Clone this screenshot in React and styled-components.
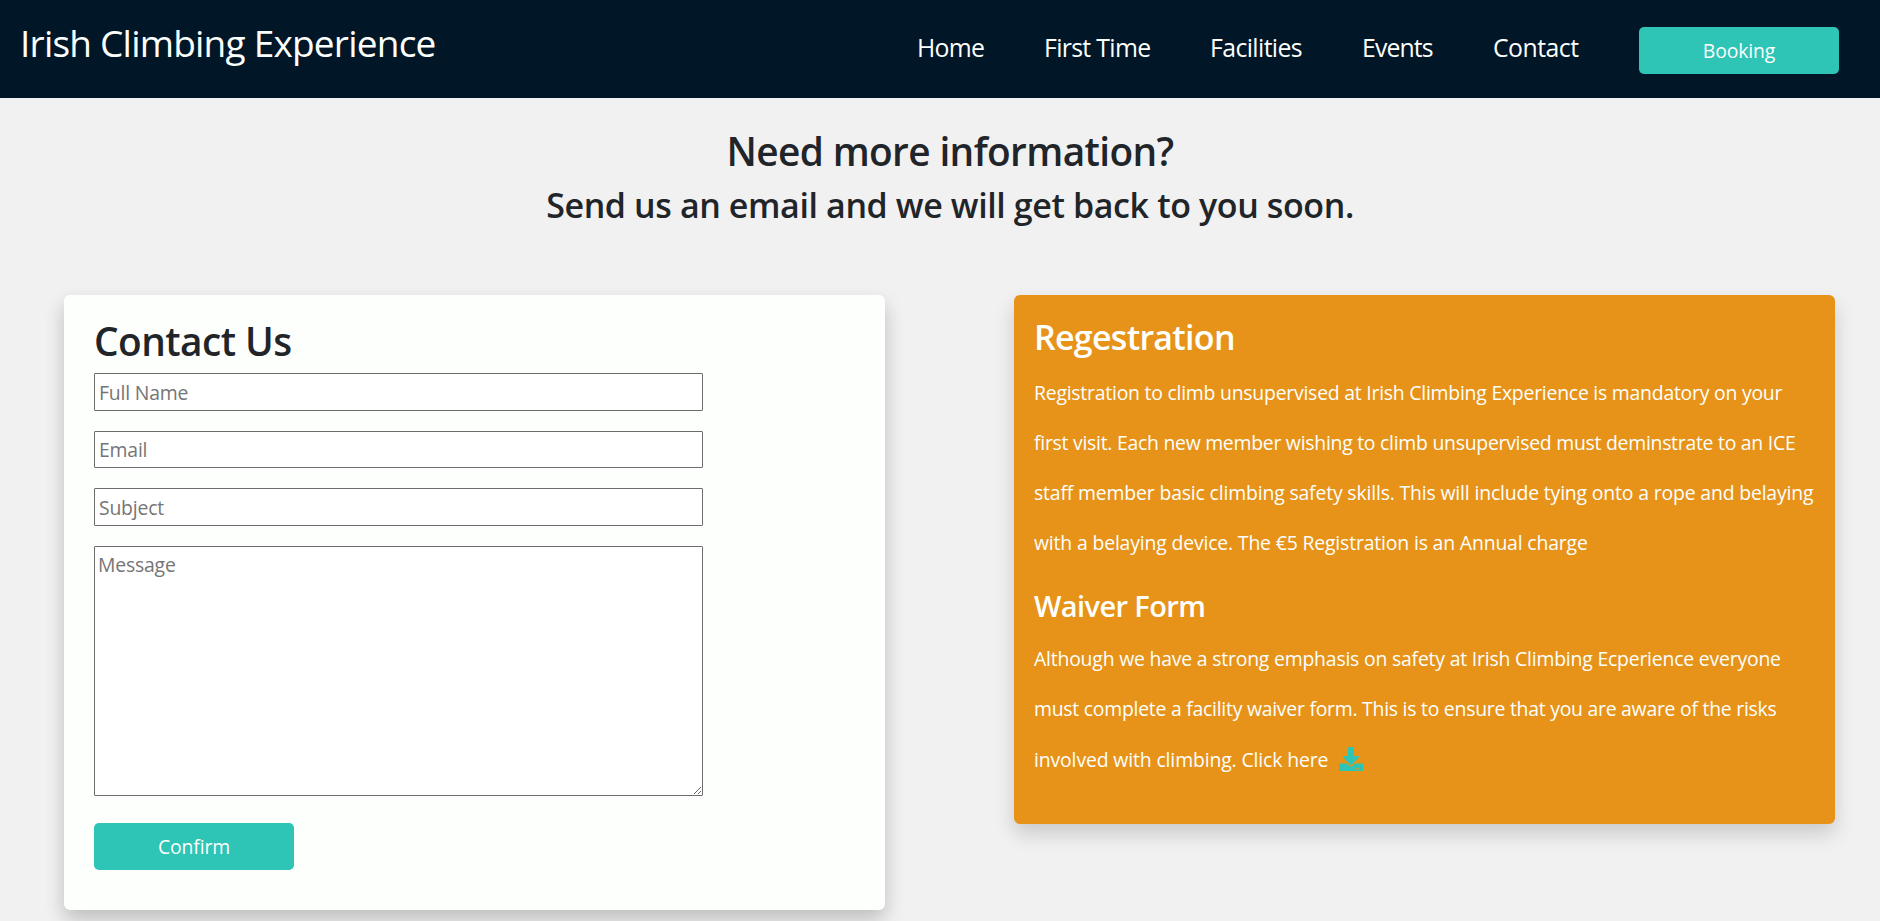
import React from "react";
import styled, { createGlobalStyle } from "styled-components";
import { FaDownload } from "react-icons/fa";

const ink = "#212529";
const paper = "#fdfffc";
const teal = "#2ec4b6";

const GlobalStyle = createGlobalStyle`
  *, *::before, *::after { box-sizing: border-box; }
  html { overflow: hidden; }
  body {
    margin: 0;
    height: 921px;
    overflow: hidden;
    background: #f1f1f1;
    color: ${ink};
    font-family: "Segoe UI", "Open Sans", sans-serif;
    font-size: 19.4px;
  }
  h1, h2, h3, p { margin: 0; }
`;

const Header = styled.header`
  display: flex;
  justify-content: space-between;
  align-items: flex-start;
  height: 98px;
  padding: 0 41px 0 20px;
  background: #011627;
`;

const Brand = styled.a`
  padding-top: 15px;
  color: ${paper};
  font-size: 37px;
  line-height: 56px;
  letter-spacing: -0.78px;
  text-decoration: none;
`;

const Nav = styled.nav`
  display: flex;
  align-items: flex-start;
`;

const NavLink = styled.a`
  width: ${(p) => p.$width}px;
  margin-right: 60px;
  padding-top: 28px;
  color: ${paper};
  font-size: 24.8px;
  line-height: 38px;
  letter-spacing: ${(p) => p.$tracking}px;
  white-space: nowrap;
  text-decoration: none;
`;

const Button = styled.button`
  width: 200px;
  height: 47px;
  margin-top: ${(p) => p.$top}px;
  padding: 0;
  border: 0;
  border-radius: 5px;
  background: ${teal};
  color: ${paper};
  font-family: inherit;
  font-size: 19.4px;
  line-height: 47px;
  letter-spacing: -0.15px;
`;

const Intro = styled.section`
  height: 197px;
  padding: 27px 0 0 20px;
  text-align: center;
`;

const Title = styled.h1`
  font-size: ${(p) => p.$size}px;
  font-weight: 600;
  line-height: ${(p) => p.$line}px;
  letter-spacing: ${(p) => p.$tracking}px;
  white-space: nowrap;
`;

const SubTitle = styled(Title)`
  padding-top: 10px;
`;

const Columns = styled.main`
  display: flex;
  align-items: flex-start;
  gap: 129px;
  padding-left: 64px;
`;

const Card = styled.section`
  width: 821px;
  border-radius: 6px;
`;

const FormCard = styled(Card)`
  height: 615px;
  padding: 20px 30px;
  background: ${paper};
  box-shadow: 0 10px 20px rgba(0, 0, 0, 0.19), 0 6px 20px rgba(0, 0, 0, 0.03);
`;

const InfoCard = styled(Card)`
  height: 529px;
  padding: 17px 20px;
  background: #e7931a;
  color: ${paper};
  box-shadow: 0 10px 20px rgba(0, 0, 0, 0.16);
`;

const Form = styled.form`
  display: flex;
  flex-direction: column;
  align-items: flex-start;
  gap: 20px;
  padding-top: 6px;
`;

const Field = styled.input`
  width: 609px;
  height: 37.6px;
  padding: 2px 4px 1px;
  border: 1px solid #6c6c6c;
  border-radius: 1px;
  background: #fff;
  font-family: inherit;
  font-size: 19.4px;
  letter-spacing: -0.2px;
  &::placeholder { color: #757575; }
`;

const Message = styled.textarea`
  display: block;
  width: 609px;
  height: 250px;
  padding: 3px;
  border: 1px solid #6c6c6c;
  border-radius: 1px;
  background: #fff;
  font-family: inherit;
  font-size: 19.4px;
  line-height: 30px;
  letter-spacing: -0.2px;
  resize: both;
  &::placeholder { color: #757575; }
`;

const Paragraph = styled.p`
  padding-top: ${(p) => p.$top}px;
  line-height: 50px;
  white-space: nowrap;
`;

const Line = styled.span`
  display: block;
  height: 50px;
  letter-spacing: ${(p) => p.$tracking}px;
`;

const LastLine = styled(Line)`
  padding-top: 1px;
`;

const DownloadLink = styled.a`
  display: inline-flex;
  margin-left: 11px;
  color: ${teal};
  vertical-align: -4px;
`;

const links = [
  { label: "Home", width: 67, tracking: -0.75 },
  { label: "First Time", width: 106, tracking: -0.66 },
  { label: "Facilities", width: 92, tracking: -0.6 },
  { label: "Events", width: 71, tracking: -0.88 },
  { label: "Contact", width: 86, tracking: -0.5 },
];

export default function App() {
  return (
    <>
      <GlobalStyle />
      <Header>
        <Brand href="#">Irish Climbing Experience</Brand>
        <Nav>
          {links.map((l) => (
            <NavLink key={l.label} href="#" $width={l.width} $tracking={l.tracking}>
              {l.label}
            </NavLink>
          ))}
          <Button $top={27}>Booking</Button>
        </Nav>
      </Header>
      <Intro>
        <Title $size={38.8} $line={52} $tracking={-0.62}>Need more information?</Title>
        <Title as="h2" $size={34} $line={56} $tracking={-0.39}>
          Send us an email and we will get back to you soon.
        </Title>
      </Intro>
      <Columns>
        <FormCard>
          <Title as="h2" $size={38.8} $line={52} $tracking={-0.55}>Contact Us</Title>
          <Form>
            <Field placeholder="Full Name" />
            <Field placeholder="Email" />
            <Field placeholder="Subject" />
            <Message placeholder="Message" />
            <Button type="button" $top={7}>Confirm</Button>
          </Form>
        </FormCard>
        <InfoCard>
          <Title as="h2" $size={34} $line={50} $tracking={-0.72}>Regestration</Title>
          <Paragraph $top={6}>
            <Line $tracking={-0.23}>Registration to climb unsupervised at Irish Climbing Experience is mandatory on your</Line>
            <Line $tracking={-0.26}>first visit. Each new member wishing to climb unsupervised must deminstrate to an ICE</Line>
            <Line $tracking={-0.16}>staff member basic climbing safety skills. This will include tying onto a rope and belaying</Line>
            <Line $tracking={-0.16}>with a belaying device. The €5 Registration is an Annual charge</Line>
          </Paragraph>
          <SubTitle as="h3" $size={29} $line={56} $tracking={-0.6}>Waiver Form</SubTitle>
          <Paragraph $top={0}>
            <Line $tracking={-0.2}>Although we have a strong emphasis on safety at Irish Climbing Ecperience everyone</Line>
            <Line $tracking={-0.25}>must complete a facility waiver form. This is to ensure that you are aware of the risks</Line>
            <LastLine $tracking={-0.13}>
              involved with climbing. Click here
              <DownloadLink href="#" aria-label="Download"><FaDownload size={24} /></DownloadLink>
            </LastLine>
          </Paragraph>
        </InfoCard>
      </Columns>
    </>
  );
}
